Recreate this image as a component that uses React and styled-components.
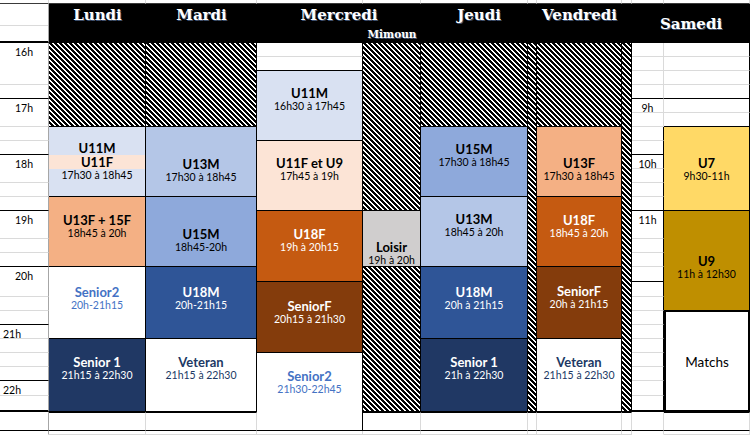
import styled, { createGlobalStyle } from "styled-components";

const GlobalStyle = createGlobalStyle`
  body {
    margin: 0;
    background: #fff;
    overflow: hidden;
  }
`;

const GRID = "#dadada";

const Sheet = styled.div`
  display: grid;
  grid-template-columns: 49px 97px 111px 106px 58px 107px 9px 85px 10px 32px 86px;
  grid-template-rows: 4px 39px repeat(16, 14px) 15px 15px repeat(6, 14px) 15px 16px 19px 4px;
  width: 751px;
  height: 435px;
  overflow: hidden;
  background: #fff;
  font-family: Lato, "Liberation Sans", sans-serif;
`;

const Blank = styled.div`
  grid-column: ${(p) => p.$col};
  grid-row: ${(p) => p.$row};
  border-right: 1px solid ${(p) => p.$rc || GRID};
  border-bottom: ${(p) => p.$bw || 1}px solid ${(p) => p.$bc || GRID};
  ${(p) => p.$tc && `border-top: 1px solid ${p.$tc};`}
`;

const HourCell = styled(Blank)`
  font-size: 10.5px;
  line-height: 14px;
  padding: 2px 0 0 ${(p) => (p.$align === "left" ? 3 : 0)}px;
  text-align: ${(p) => p.$align || "center"};
  color: #000;
`;

const Corner = styled.div`
  grid-column: 1;
  grid-row: 2 / 3;
  border-right: 1px solid #a6a6a6;
  border-bottom: 2px solid #000;
  & > div {
    height: 21px;
    border-bottom: 1px solid ${GRID};
  }
`;

const HeadBar = styled.div`
  grid-column: 2 / 12;
  grid-row: 2 / 3;
  background: #000;
`;

const DayName = styled.div`
  grid-column: ${(p) => p.$col};
  grid-row: 2 / 3;
  z-index: 1;
  padding-top: ${(p) => p.$pt}px;
  text-align: center;
  white-space: nowrap;
  color: #fff;
  font-family: "DejaVu Serif", "Liberation Serif", serif;
  font-weight: 700;
  font-size: ${(p) => p.$size || 15}px;
  line-height: ${(p) => (p.$size ? 12 : 18)}px;
  text-shadow: 1px 1px 0 rgba(120, 150, 200, 0.55);
`;

const Hatch = styled.div`
  grid-column: ${(p) => p.$col};
  grid-row: ${(p) => p.$row};
  border-right: 1px solid #000;
  border-bottom: 1px solid #000;
  background-color: #fff;
  background-image: linear-gradient(
    45deg,
    #000 25%,
    #fff 25%,
    #fff 50%,
    #000 50%,
    #000 75%,
    #fff 75%
  );
  background-size: 5px 5px;
`;

const Slot = styled.div`
  grid-column: ${(p) => p.$col};
  grid-row: ${(p) => p.$row};
  display: flex;
  flex-direction: column;
  align-items: center;
  padding-top: ${(p) => p.$pad}px;
  background: ${(p) => p.$bg};
  color: ${(p) => p.$fg || "#000"};
  border-right: 1px solid #000;
  border-bottom: 1px solid #000;
  white-space: nowrap;
`;

const MatchBox = styled(Slot)`
  border: 2px solid #000;
  border-top-width: 1px;
`;

const Title = styled.div`
  font-weight: ${(p) => (p.$plain ? 400 : 700)};
  font-size: ${(p) => (p.$plain ? 13.5 : 13)}px;
  line-height: 14px;
`;

const Band = styled(Title)`
  align-self: stretch;
  text-align: center;
  background: #fce4d6;
`;

const Time = styled.div`
  font-size: 10.5px;
  line-height: 13px;
`;

const colA = [
  ["3 / 6", "16h", "g"],
  ["6 / 7", "", "k"],
  ["7 / 9", "17h", "g"],
  ["9 / 10", "", "g"],
  ["10 / 11", "", "k"],
  ["11 / 13", "18h", "g"],
  ["13 / 14", "", "g"],
  ["14 / 15", "", "k"],
  ["15 / 17", "19h", "g"],
  ["17 / 18", "", "g"],
  ["18 / 19", "", "k"],
  ["19 / 21", "20h", "g"],
  ["21 / 22", "", "g"],
  ["22 / 23", "", "k"],
  ["23 / 24", "21h", "g", "left"],
  ["24 / 25", "", "g"],
  ["25 / 26", "", "g"],
  ["26 / 27", "", "k"],
  ["27 / 28", "22h", "g", "left"],
  ["28 / 29", "", "k2"],
  ["29 / 30", "", "k"],
  ["30 / 31", "", "n"],
];

const satTime = [
  ["3 / 4", "", "g"],
  ["4 / 5", "", "g"],
  ["5 / 6", "", "g"],
  ["6 / 7", "", "k"],
  ["7 / 8", "9h", "g"],
  ["8 / 9", "", "g"],
  ["9 / 10", "", "g"],
  ["10 / 11", "", "k"],
  ["11 / 12", "10h", "g"],
  ["12 / 13", "", "g"],
  ["13 / 14", "", "g"],
  ["14 / 15", "", "k"],
  ["15 / 17", "11h", "g"],
  ["17 / 18", "", "g"],
  ["18 / 19", "", "g"],
  ["19 / 20", "", "k"],
  ["20 / 21", "", "g"],
  ["21 / 22", "", "g"],
  ["22 / 23", "", "g"],
  ["23 / 24", "", "g"],
  ["24 / 25", "", "g"],
  ["25 / 26", "", "g"],
  ["26 / 27", "", "g"],
  ["27 / 28", "", "g"],
  ["28 / 29", "", "k2"],
  ["29 / 30", "", "k"],
  ["30 / 31", "", "n"],
];

const edge = {
  g: { bc: GRID, bw: 1 },
  k: { bc: "#000", bw: 1 },
  k2: { bc: "#000", bw: 2 },
  n: { bc: "transparent", bw: 0 },
};

const hatches = [
  [2, "3 / 9"],
  [3, "3 / 9"],
  [5, "3 / 15"],
  [5, "19 / 29"],
  [6, "3 / 9"],
  [7, "3 / 29"],
  [8, "3 / 9"],
  [9, "3 / 29"],
];

const slots = [
  { col: 2, row: "14 / 19", bg: "#F4B084", pad: 16, title: "U13F + 15F", time: "18h45 à 20h" },
  { col: 2, row: "19 / 24", bg: "#fff", fg: "#4472C4", pad: 18, title: "Senior2", time: "20h-21h15" },
  { col: 2, row: "24 / 29", bg: "#203864", fg: "#fff", pad: 16, title: "Senior 1", time: "21h15 à 22h30" },
  { col: 3, row: "9 / 14", bg: "#B4C6E7", pad: 30, title: "U13M", time: "17h30 à 18h45" },
  { col: 3, row: "14 / 19", bg: "#8EA9DB", pad: 30, title: "U15M", time: "18h45-20h" },
  { col: 3, row: "19 / 24", bg: "#2F5597", fg: "#fff", pad: 18, title: "U18M", time: "20h-21h15" },
  { col: 3, row: "24 / 29", bg: "#fff", fg: "#203864", pad: 16, title: "Veteran", time: "21h15 à 22h30" },
  { col: 4, row: "5 / 10", bg: "#D9E1F2", pad: 15, title: "U11M", time: "16h30 à 17h45" },
  { col: 4, row: "10 / 15", bg: "#FCE4D6", pad: 15, title: "U11F et U9", time: "17h45 à 19h" },
  { col: 4, row: "15 / 20", bg: "#C55A11", fg: "#fff", pad: 16, title: "U18F", time: "19h à 20h15" },
  { col: 4, row: "20 / 25", bg: "#843C0C", fg: "#fff", pad: 17, title: "SeniorF", time: "20h15 à 21h30" },
  { col: 4, row: "25 / 30", bg: "#fff", fg: "#4472C4", pad: 16, title: "Senior2", time: "21h30-22h45" },
  { col: 5, row: "15 / 19", bg: "#D0CECE", pad: 29, title: "Loisir", time: "19h à 20h" },
  { col: 6, row: "9 / 14", bg: "#8EA9DB", pad: 15, title: "U15M", time: "17h30 à 18h45" },
  { col: 6, row: "14 / 19", bg: "#B4C6E7", pad: 15, title: "U13M", time: "18h45 à 20h" },
  { col: 6, row: "19 / 24", bg: "#2F5597", fg: "#fff", pad: 18, title: "U18M", time: "20h à 21h15" },
  { col: 6, row: "24 / 29", bg: "#203864", fg: "#fff", pad: 16, title: "Senior 1", time: "21h à 22h30" },
  { col: 8, row: "9 / 14", bg: "#F4B084", pad: 29, title: "U13F", time: "17h30 à 18h45" },
  { col: 8, row: "14 / 19", bg: "#C55A11", fg: "#fff", pad: 16, title: "U18F", time: "18h45 à 20h" },
  { col: 8, row: "19 / 24", bg: "#843C0C", fg: "#fff", pad: 17, title: "SeniorF", time: "20h à 21h15" },
  { col: 8, row: "24 / 29", bg: "#fff", fg: "#203864", pad: 16, title: "Veteran", time: "21h15 à 22h30" },
  { col: 11, row: "9 / 15", bg: "#FFD966", pad: 29, title: "U7", time: "9h30-11h" },
  { col: 11, row: "15 / 22", bg: "#BF8F00", pad: 43, title: "U9", time: "11h à 12h30" },
];

function startLine(row) {
  return parseInt(row, 10);
}

export default function App() {
  const topStrip = Array.from({ length: 11 }, (_, i) => (
    <Blank key={"t" + i} $col={i + 1} $row="1 / 2" $bc="#3a3a3a" />
  ));

  const bottomCols = [2, 3, 5, 6, 7, 8, 9, 11];

  return (
    <>
      <GlobalStyle />
      <Sheet>
        {topStrip}

        <Corner>
          <div />
        </Corner>
        <HeadBar />
        <DayName $col="2" $pt={2}>Lundi</DayName>
        <DayName $col="3" $pt={2}>Mardi</DayName>
        <DayName $col="4 / 6" $pt={2}>Mercredi</DayName>
        <DayName $col="5" $pt={24} $size={10.5}>Mimoun</DayName>
        <DayName $col="6 / 8" $pt={2}>Jeudi</DayName>
        <DayName $col="8" $pt={2}>Vendredi</DayName>
        <DayName $col="10 / 12" $pt={11}>Samedi</DayName>

        {colA.map(([row, label, b, align]) => (
          <HourCell
            key={"a" + row}
            $col={1}
            $row={row}
            $rc="#a6a6a6"
            $bc={edge[b].bc}
            $bw={edge[b].bw}
            $align={align}
          >
            {label}
          </HourCell>
        ))}

        {satTime.map(([row, label, b]) => {
          const s = startLine(row);
          return (
            <HourCell
              key={"s" + row}
              $col={10}
              $row={row}
              $rc={s >= 9 && s < 29 ? "#000" : GRID}
              $bc={edge[b].bc}
              $bw={edge[b].bw}
            >
              {label}
            </HourCell>
          );
        })}

        <Blank $col={4} $row="3 / 4" $rc="#000" />
        <Blank $col={4} $row="4 / 5" $rc="#000" $bc="#000" />
        <Blank $col={4} $row="30 / 31" $bw={0} />

        <Blank $col={11} $row="3 / 4" $rc="#000" />
        <Blank $col={11} $row="4 / 5" $rc="#000" />
        <Blank $col={11} $row="5 / 6" $rc="#000" />
        <Blank $col={11} $row="6 / 7" $rc="#000" $bc="#000" />
        <Blank $col={11} $row="7 / 8" $rc="#000" />
        <Blank $col={11} $row="8 / 9" $rc="#000" $bc="#000" />

        {bottomCols.map((c) => (
          <Blank key={"b" + c} $col={c} $row="29 / 30" $bc="#000" $tc="#000" />
        ))}
        {bottomCols.map((c) => (
          <Blank key={"e" + c} $col={c} $row="30 / 31" $bw={0} />
        ))}

        {hatches.map(([col, row]) => (
          <Hatch key={"h" + col + row} $col={col} $row={row} />
        ))}

        <Slot $col={2} $row="9 / 14" $bg="#D9E1F2" $pad={14}>
          <Title>U11M</Title>
          <Band>U11F</Band>
          <Time>17h30 à 18h45</Time>
        </Slot>

        {slots.map((s) => (
          <Slot
            key={s.col + s.row}
            $col={s.col}
            $row={s.row}
            $bg={s.bg}
            $fg={s.fg}
            $pad={s.pad}
          >
            <Title>{s.title}</Title>
            <Time>{s.time}</Time>
          </Slot>
        ))}

        <MatchBox $col={11} $row="22 / 29" $bg="#fff" $pad={43}>
          <Title $plain>Matchs</Title>
        </MatchBox>
      </Sheet>
    </>
  );
}
